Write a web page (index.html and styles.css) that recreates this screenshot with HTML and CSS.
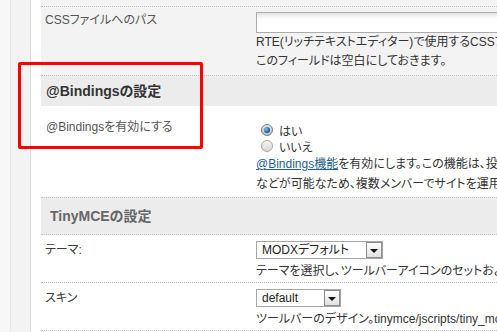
FILE: index.html
```html
<!DOCTYPE html>
<html lang="ja">
<head>
    <meta charset="UTF-8">
    <meta name="viewport" content="width=device-width, initial-scale=1.0">
    <title>MODX - システム設定</title>
    <link rel="stylesheet" href="styles.css">
</head>
<body>
    <div class="shell">
        <div class="rail-outer"></div>
        <div class="rail-inner"></div>
        <div class="main">
            <div class="lead"></div>

            <div class="row row-muted">
                <div class="label label-first">CSSファイルへのパス</div>
                <div class="value value-first">
                    <div class="text-input"></div>
                    <p class="desc">RTE(リッチテキストエディター)で使用するCSSファイルへのパスを指定します。使用しない場合は<br>このフィールドは空白にしておきます。</p>
                </div>
            </div>

            <h3 class="section-head">@Bindingsの設定</h3>

            <div class="row">
                <div class="label label-bindings">@Bindingsを有効にする</div>
                <div class="value value-bindings">
                    <label class="radio"><span class="radio-dot checked"></span>はい</label>
                    <label class="radio"><span class="radio-dot"></span>いいえ</label>
                    <p class="desc desc-loose"><a href="#">@Bindings機能</a>を有効にします。この機能は、投稿画面からコマンドを実行すること<br>などが可能なため、複数メンバーでサイトを運用する場合は注意が必要です。</p>
                </div>
            </div>

            <h3 class="section-head section-head-tall">TinyMCEの設定</h3>

            <div class="row">
                <div class="label label-select">テーマ:</div>
                <div class="value value-select">
                    <div class="select select-wide">
                        <span class="select-text">MODXデフォルト</span>
                        <span class="select-btn"></span>
                    </div>
                    <p class="desc desc-after-select">テーマを選択し、ツールバーアイコンのセットおよびスタイルを指定します。</p>
                </div>
            </div>

            <div class="row">
                <div class="label label-select">スキン</div>
                <div class="value value-select">
                    <div class="select select-narrow">
                        <span class="select-text">default</span>
                        <span class="select-btn"></span>
                    </div>
                    <p class="desc desc-after-select">ツールバーのデザイン。tinymce/jscripts/tiny_mce/themes/advanced/skins/</p>
                </div>
            </div>
        </div>
    </div>

    <div class="highlight"></div>
</body>
</html>
```

FILE: styles.css
```css
body {
    margin: 0;
    height: 100vh;
    overflow: hidden;
    font-family: "Liberation Sans", "Noto Sans CJK JP", sans-serif;
    font-size: 12px;
    font-feature-settings: "palt";
    color: #333;
    background: #f7f7f7;
    position: relative;
}

.shell {
    display: flex;
    min-height: 100vh;
}

.rail-outer {
    width: 10px;
    flex-shrink: 0;
    background: #f7f7f7;
    border-right: 1px solid #e6e6e6;
}

.rail-inner {
    width: 19px;
    flex-shrink: 0;
    background: #f3f3f3;
    border-right: 1px solid #dcdcdc;
}

.main {
    flex: 1;
    min-width: 0;
    background: #fff;
    padding-left: 10px;
    overflow: hidden;
}

.lead {
    height: 6px;
    background: #f3f3f3;
    border-bottom: 1px dotted #bdbdbd;
}

.row {
    display: grid;
    grid-template-columns: 215px 600px;
    border-bottom: 1px dotted #bdbdbd;
}

.row-muted {
    background: #f3f3f3;
}

.label {
    padding-left: 4px;
    line-height: 19px;
    color: #3a3a3a;
    white-space: nowrap;
}

.label-first { padding-top: 4px; color: #555; }
.label-bindings { padding-top: 12px; padding-left: 5px; color: #555; }
.label-select { padding-top: 6px; }

.value-first { padding: 5px 0 4px; }
.value-bindings { padding: 16px 0 3px; }
.value-select { padding: 6px 0 1px; }

.text-input {
    width: 320px;
    height: 19px;
    border: 1px solid #ababab;
    background: linear-gradient(#e4e4e4, #fff 6px, #fff);
}

.desc {
    margin: 0;
    line-height: 19px;
    white-space: nowrap;
    color: #333;
}

.desc-loose {
    line-height: 20px;
}

.desc-after-select {
    margin-top: 3px;
}

.desc a {
    color: #1b5f8c;
    text-decoration: underline;
}

.section-head {
    margin: 0;
    height: 30px;
    line-height: 30px;
    padding-left: 5px;
    background: #ececec;
    font-size: 14px;
    font-weight: bold;
    color: #333;
}

.section-head-tall {
    height: 36px;
    line-height: 36px;
    padding-left: 9px;
    color: #666;
    border-top: 1px dotted #bdbdbd;
    border-bottom: 1px dotted #bdbdbd;
    margin-top: -1px;
}

.radio {
    display: flex;
    align-items: center;
    height: 16px;
    padding-left: 5px;
    gap: 6px;
    color: #333;
}

.radio-dot {
    width: 10px;
    height: 10px;
    border-radius: 50%;
    border: 1px solid #a8a8a8;
    background: linear-gradient(#f6f6f6, #d8d8d8);
    display: flex;
    align-items: center;
    justify-content: center;
}

.radio-dot.checked {
    border-color: #7e7e7e;
    background: linear-gradient(#e8e8e8, #bdbdbd);
}

.radio-dot.checked::after {
    content: "";
    width: 6px;
    height: 6px;
    border-radius: 50%;
    background: radial-gradient(circle at 35% 35%, #7fc4f2, #1466b3 60%, #0b3f7a);
}

.select {
    display: flex;
    align-items: center;
    justify-content: space-between;
    height: 16px;
    border: 1px solid #a6a6a6;
    background: #fff;
}

.select-wide { width: 125px; }
.select-narrow { width: 83px; }

.select-text {
    padding-left: 5px;
    line-height: 16px;
    color: #222;
    white-space: nowrap;
}

.select-btn {
    width: 14px;
    height: 14px;
    border: 1px solid #8c8c8c;
    background: linear-gradient(#fdfdfd, #e2e2e2);
    display: flex;
    align-items: center;
    justify-content: center;
}

.select-btn::after {
    content: "";
    border-left: 4px solid transparent;
    border-right: 4px solid transparent;
    border-top: 4px solid #111;
    margin-top: 1px;
}

/* annotation frame drawn over the screenshot */
.highlight {
    position: absolute;
    left: 18px;
    top: 62px;
    width: 179px;
    height: 81px;
    border: 3px solid #ff0000;
    border-radius: 2px;
}
```
